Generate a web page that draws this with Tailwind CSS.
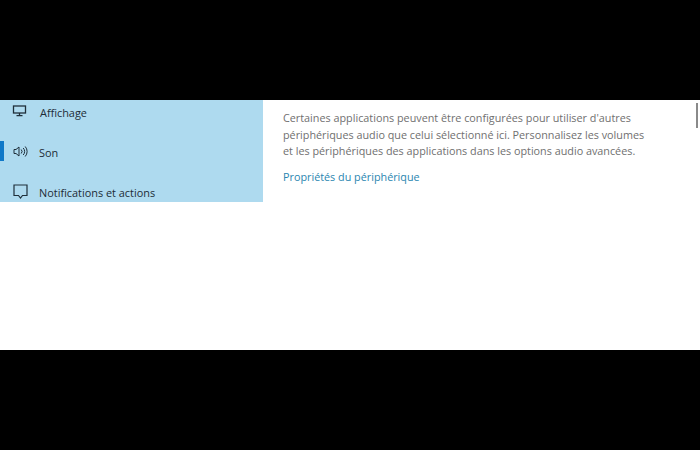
<!DOCTYPE html>
<html lang="fr">
<head>
    <meta charset="UTF-8">
    <title>Son</title>
    <script src="https://cdn.jsdelivr.net/npm/@tailwindcss/browser@4"></script>
</head>
<body class="bg-black w-[700px] h-[450px] overflow-hidden font-['Open_Sans','Noto_Sans',sans-serif]">
    <div class="h-[100px]"></div>

    <div class="h-[250px] bg-white">
        <div class="flex h-[102px]">
            <!-- Sidebar -->
            <div class="w-[263px] h-full bg-[#aedaef] text-[10.9px] text-[#1c2c36] overflow-hidden">
                <div class="-mt-[7px]">
                    <div class="h-[40px] flex items-center pl-[12px]">
                        <svg class="w-[15px] h-[12px] -mt-[4px]" viewBox="0 0 15 12" fill="none" stroke="#1f2f3a" stroke-width="1.300">
                            <rect x="1.500" y="1" width="12" height="7"></rect>
                            <path d="M7.500 8v2.500M4.500 10.700h6"></path>
                        </svg>
                        <span class="ml-[13px]">Affichage</span>
                    </div>
                    <div class="h-[40px] flex items-center relative pl-[13px]">
                        <div class="absolute left-0 top-[8px] w-[4px] h-[20px] bg-[#0f78c8]"></div>
                        <svg class="w-[15px] h-[13px] -mt-[4px]" viewBox="0 0 15 13" fill="none" stroke="#1f2f3a" stroke-width="1">
                            <path d="M1 4.500h2L6 2v9L3 8.500H1z"></path>
                            <path d="M8.200 4.500a3 3 0 0 1 0 4M10.200 3a5 5 0 0 1 0 7M12.200 1.500a7.500 7.500 0 0 1 0 10"></path>
                        </svg>
                        <span class="ml-[11px]">Son</span>
                    </div>
                    <div class="h-[40px] flex items-center pl-[13px]">
                        <svg class="w-[15px] h-[15px] -mt-[4px]" viewBox="0 0 15 15" fill="none" stroke="#1f2f3a" stroke-width="1.200">
                            <path d="M1 1h13v10.500H9.500L7.500 14l-2-2.500H1z"></path>
                        </svg>
                        <span class="ml-[11px]">Notifications et actions</span>
                    </div>
                </div>
            </div>

            <!-- Content -->
            <div class="flex-1 relative pl-[20px] pt-[10px] text-[10.8px]">
                <p class="leading-[16.5px] text-[#6f6f6f] whitespace-nowrap">
                    Certaines applications peuvent être configurées pour utiliser d'autres<br>
                    périphériques audio que celui sélectionné ici. Personnalisez les volumes<br>
                    et les périphériques des applications dans les options audio avancées.
                </p>
                <a class="block mt-[9px] leading-[16px] text-[#2a86b0]">Propriétés du périphérique</a>
                <div class="absolute right-[2px] top-[3px] w-[2px] h-[25px] bg-[#8a8a8a]"></div>
            </div>
        </div>
    </div>
</body>
</html>
